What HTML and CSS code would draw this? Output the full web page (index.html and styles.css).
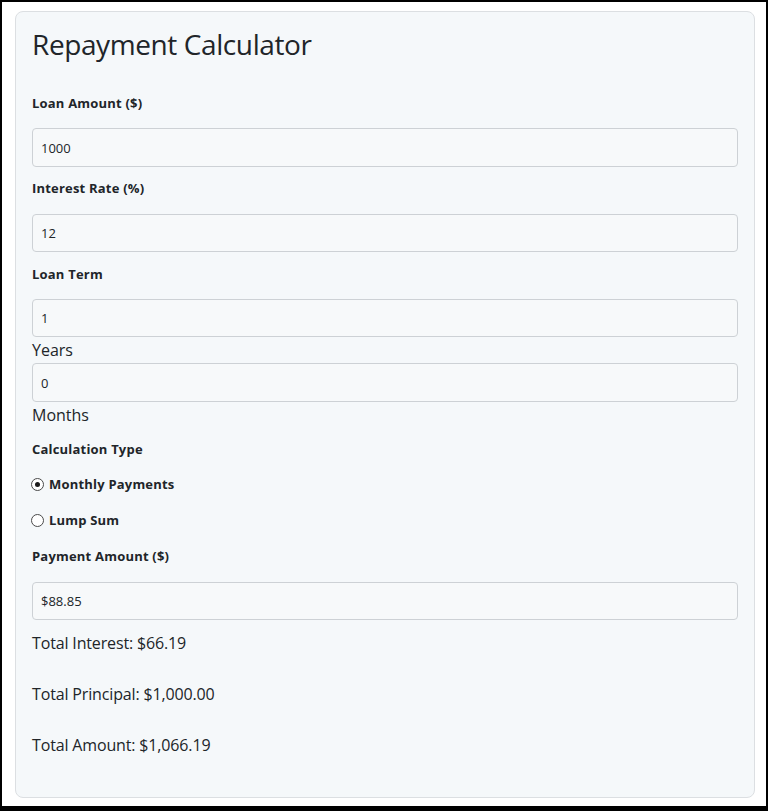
FILE: index.html
```html
<!DOCTYPE html>
<html lang="en">
<head>
<meta charset="utf-8">
<title>Repayment Calculator</title>
<link rel="stylesheet" href="styles.css">
</head>
<body>
<div class="frame">
  <div class="card">
    <h1 class="title">Repayment Calculator</h1>
    <div class="group">
      <label class="label" for="amount">Loan Amount ($)</label>
      <input class="input" id="amount" type="text" value="1000">
    </div>
    <div class="group">
      <label class="label" for="rate">Interest Rate (%)</label>
      <input class="input" id="rate" type="text" value="12">
    </div>
    <div class="group group-term">
      <label class="label" for="years">Loan Term</label>
      <input class="input" id="years" type="text" value="1">
      <span class="unit">Years</span>
      <input class="input" id="months" type="text" value="0">
      <span class="unit">Months</span>
    </div>
    <div class="group group-radio">
      <div class="label">Calculation Type</div>
      <label class="radio-row"><input class="radio" type="radio" name="type" checked><span>Monthly Payments</span></label>
      <label class="radio-row"><input class="radio" type="radio" name="type"><span>Lump Sum</span></label>
    </div>
    <div class="group">
      <label class="label" for="payment">Payment Amount ($)</label>
      <input class="input" id="payment" type="text" value="$88.85">
    </div>
    <div class="results">
      <p class="result">Total Interest: $66.19</p>
      <p class="result">Total Principal: $1,000.00</p>
      <p class="result">Total Amount: $1,066.19</p>
    </div>
  </div>
</div>
</body>
</html>
```
FILE: styles.css
```css
html {
  background: #000;
}
body {
  margin: 0;
  padding: 2px 2px 0 2px;
  font-family: "Open Sans", "Noto Sans", sans-serif;
  color: #212529;
}
.frame {
  background: #fff;
  height: 804px;
  box-sizing: border-box;
  padding: 9px 11px 0 13px;
}
.card {
  background: #f5f8fa;
  border: 1px solid #dcdfe2;
  border-radius: 8px;
  padding: 16px;
}
.title {
  margin: 0 0 31.4px;
  font-size: 28px;
  font-weight: 400;
  line-height: 1.2;
  letter-spacing: -0.4px;
  color: #212529;
}
.group {
  margin-bottom: 11.5px;
}
.group-term {
  margin-bottom: 11px;
}
.label {
  display: block;
  font-size: 13px;
  font-weight: 700;
  line-height: 21px;
  letter-spacing: 0.2px;
  margin-bottom: 14.5px;
  color: #212529;
}
.input {
  display: block;
  box-sizing: border-box;
  width: 100%;
  height: 38.3px;
  margin: 0;
  padding: 0 8px;
  border: 1px solid #cdd1d5;
  border-radius: 4px;
  background: #f7f9fa;
  font-family: inherit;
  font-size: 13px;
  color: #212529;
  outline: none;
}
.unit {
  display: block;
  font-size: 16px;
  line-height: 26px;
}
.group-radio {
  margin-bottom: 0;
}
.radio-row {
  display: flex;
  align-items: center;
  height: 21px;
  margin-bottom: 15px;
  font-size: 13px;
  font-weight: 700;
  line-height: 21px;
  letter-spacing: 0.2px;
}
.radio {
  appearance: none;
  -webkit-appearance: none;
  box-sizing: border-box;
  width: 13px;
  height: 13px;
  margin: 0 5px 0 -1px;
  border: 1px solid #4a4a4a;
  border-radius: 50%;
  background: #fff;
  display: grid;
  place-items: center;
}
.radio:checked::after {
  content: "";
  width: 5px;
  height: 5px;
  border-radius: 50%;
  background: #1a1a1a;
}
.results {
  display: flex;
  flex-direction: column;
  gap: 27px;
  padding-bottom: 24px;
}
.result {
  margin: 0;
  font-size: 16px;
  line-height: 24px;
  letter-spacing: -0.15px;
}
```
